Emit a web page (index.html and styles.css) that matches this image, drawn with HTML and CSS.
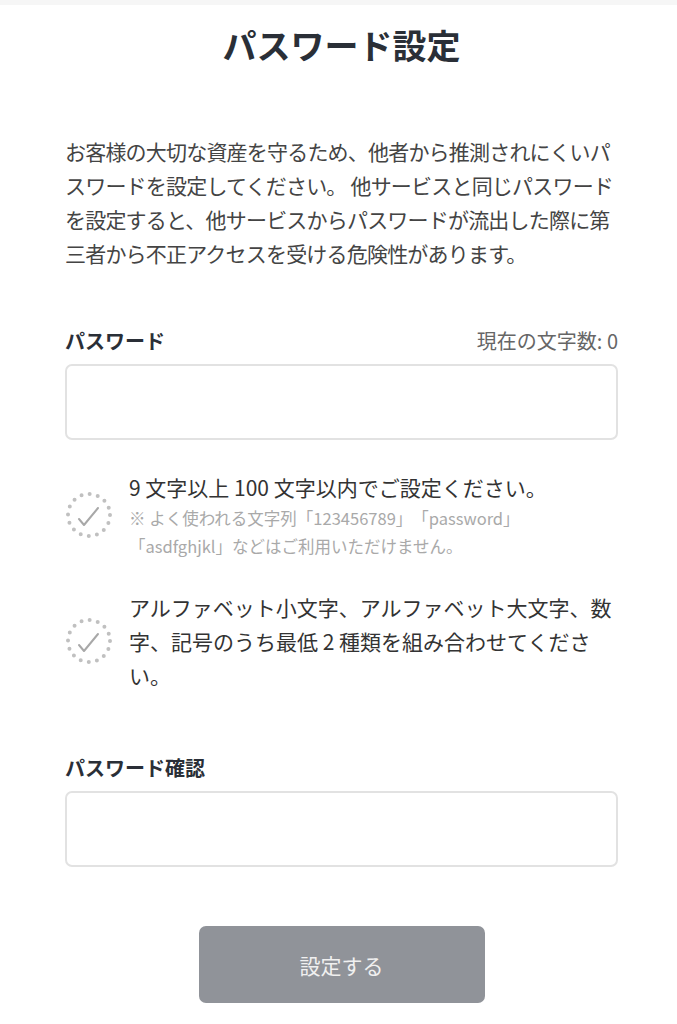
FILE: index.html
```html
<!DOCTYPE html>
<html lang="ja">
<head>
  <meta charset="UTF-8" />
  <meta name="viewport" content="width=device-width, initial-scale=1.0"/>
  <title>パスワード設定</title>
  <link rel="stylesheet" href="styles.css">
</head>
<body>
  <div class="top-bar"></div>
  <main class="page">
    <h1 class="title">パスワード設定</h1>
    <p class="lead">お客様の大切な資産を守るため、他者から推測されにくいパスワードを設定してください。 他サービスと同じパスワードを設定すると、他サービスからパスワードが流出した際に第三者から不正アクセスを受ける危険性があります。</p>

    <form class="form" onsubmit="return false">
      <div class="field">
        <div class="field-head">
          <label for="password" class="field-label">パスワード</label>
          <span class="counter">現在の文字数: <span id="count">0</span></span>
        </div>
        <input id="password" class="field-input" type="password" />
      </div>

      <ul class="rules">
        <li class="rule">
          <svg class="rule-icon" width="48" height="48" viewBox="0 0 48 48">
            <circle cx="24" cy="24" r="21" fill="none" stroke="#c0c0c0" stroke-width="4" stroke-linecap="round" stroke-dasharray="0 8.25"/>
            <polyline points="14,28 19,34 33,17" fill="none" stroke="#a8a8a8" stroke-width="2" stroke-linecap="round" stroke-linejoin="round"/>
          </svg>
          <div class="rule-body">
            <p class="rule-text">9 文字以上 100 文字以内でご設定ください。</p>
            <p class="rule-note">※ よく使われる文字列「123456789」「password」「asdfghjkl」などはご利用いただけません。</p>
          </div>
        </li>
        <li class="rule">
          <svg class="rule-icon" width="48" height="48" viewBox="0 0 48 48">
            <circle cx="24" cy="24" r="21" fill="none" stroke="#c0c0c0" stroke-width="4" stroke-linecap="round" stroke-dasharray="0 8.25"/>
            <polyline points="14,28 19,34 33,17" fill="none" stroke="#a8a8a8" stroke-width="2" stroke-linecap="round" stroke-linejoin="round"/>
          </svg>
          <div class="rule-body">
            <p class="rule-text">アルファベット小文字、アルファベット大文字、数字、記号のうち最低 2 種類を組み合わせてください。</p>
          </div>
        </li>
      </ul>

      <div class="field field-confirm">
        <div class="field-head">
          <label for="password2" class="field-label">パスワード確認</label>
        </div>
        <input id="password2" class="field-input" type="password" />
      </div>

      <div class="actions">
        <button type="submit" class="submit" disabled>設定する</button>
      </div>
    </form>
  </main>

  <script>
    document.getElementById("password").addEventListener("input", function () {
      document.getElementById("count").textContent = this.value.length;
    });
  </script>
</body>
</html>
```

FILE: styles.css
```css
* { box-sizing: border-box; }
body {
  margin: 0;
  background: #fff;
  color: #333;
  font-family: "Noto Sans CJK JP", "Noto Sans", sans-serif;
  text-spacing-trim: space-all;
}
.top-bar { height: 5px; background: #f6f6f6; }
.page { padding: 0 59px 0 65px; }

.title {
  margin: 20px 0 0;
  font-size: 34px;
  line-height: 40px;
  font-weight: 700;
  text-align: center;
  color: #2a2f37;
}
.lead {
  margin: 69px 0 0;
  font-size: 21px;
  line-height: 34px;
  letter-spacing: -0.8px;
  color: #444;
}

.field { margin-top: 56px; }
.field-head {
  display: flex;
  justify-content: space-between;
  align-items: center;
  height: 28px;
}
.field-label { font-size: 20px; font-weight: 700; color: #2a2f37; }
.counter { font-size: 20px; color: #666; }
.field-input {
  display: block;
  width: 100%;
  height: 76px;
  margin-top: 10px;
  border: 2px solid #e2e2e2;
  border-radius: 7px;
  background: #fff;
  font-size: 20px;
  padding: 0 16px;
}

.rules { list-style: none; margin: 30px 0 0; padding: 0; }
.rule { display: flex; align-items: center; gap: 16px; margin-bottom: 30px; }
.rule-icon { flex: none; }
.rule-body { flex: 1; }
.rule-text { margin: 0; font-size: 21px; line-height: 34px; color: #333; }
.rule-note { margin: 0; font-size: 16.5px; line-height: 28px; color: #a9a9a9; }

.field-confirm { margin-top: 61px; }

.actions { display: flex; justify-content: center; margin-top: 59px; }
.submit {
  width: 286px;
  height: 77px;
  border: none;
  border-radius: 7px;
  background: #909399;
  color: #f0f0f0;
  font-family: inherit;
  font-size: 21px;
}
```
